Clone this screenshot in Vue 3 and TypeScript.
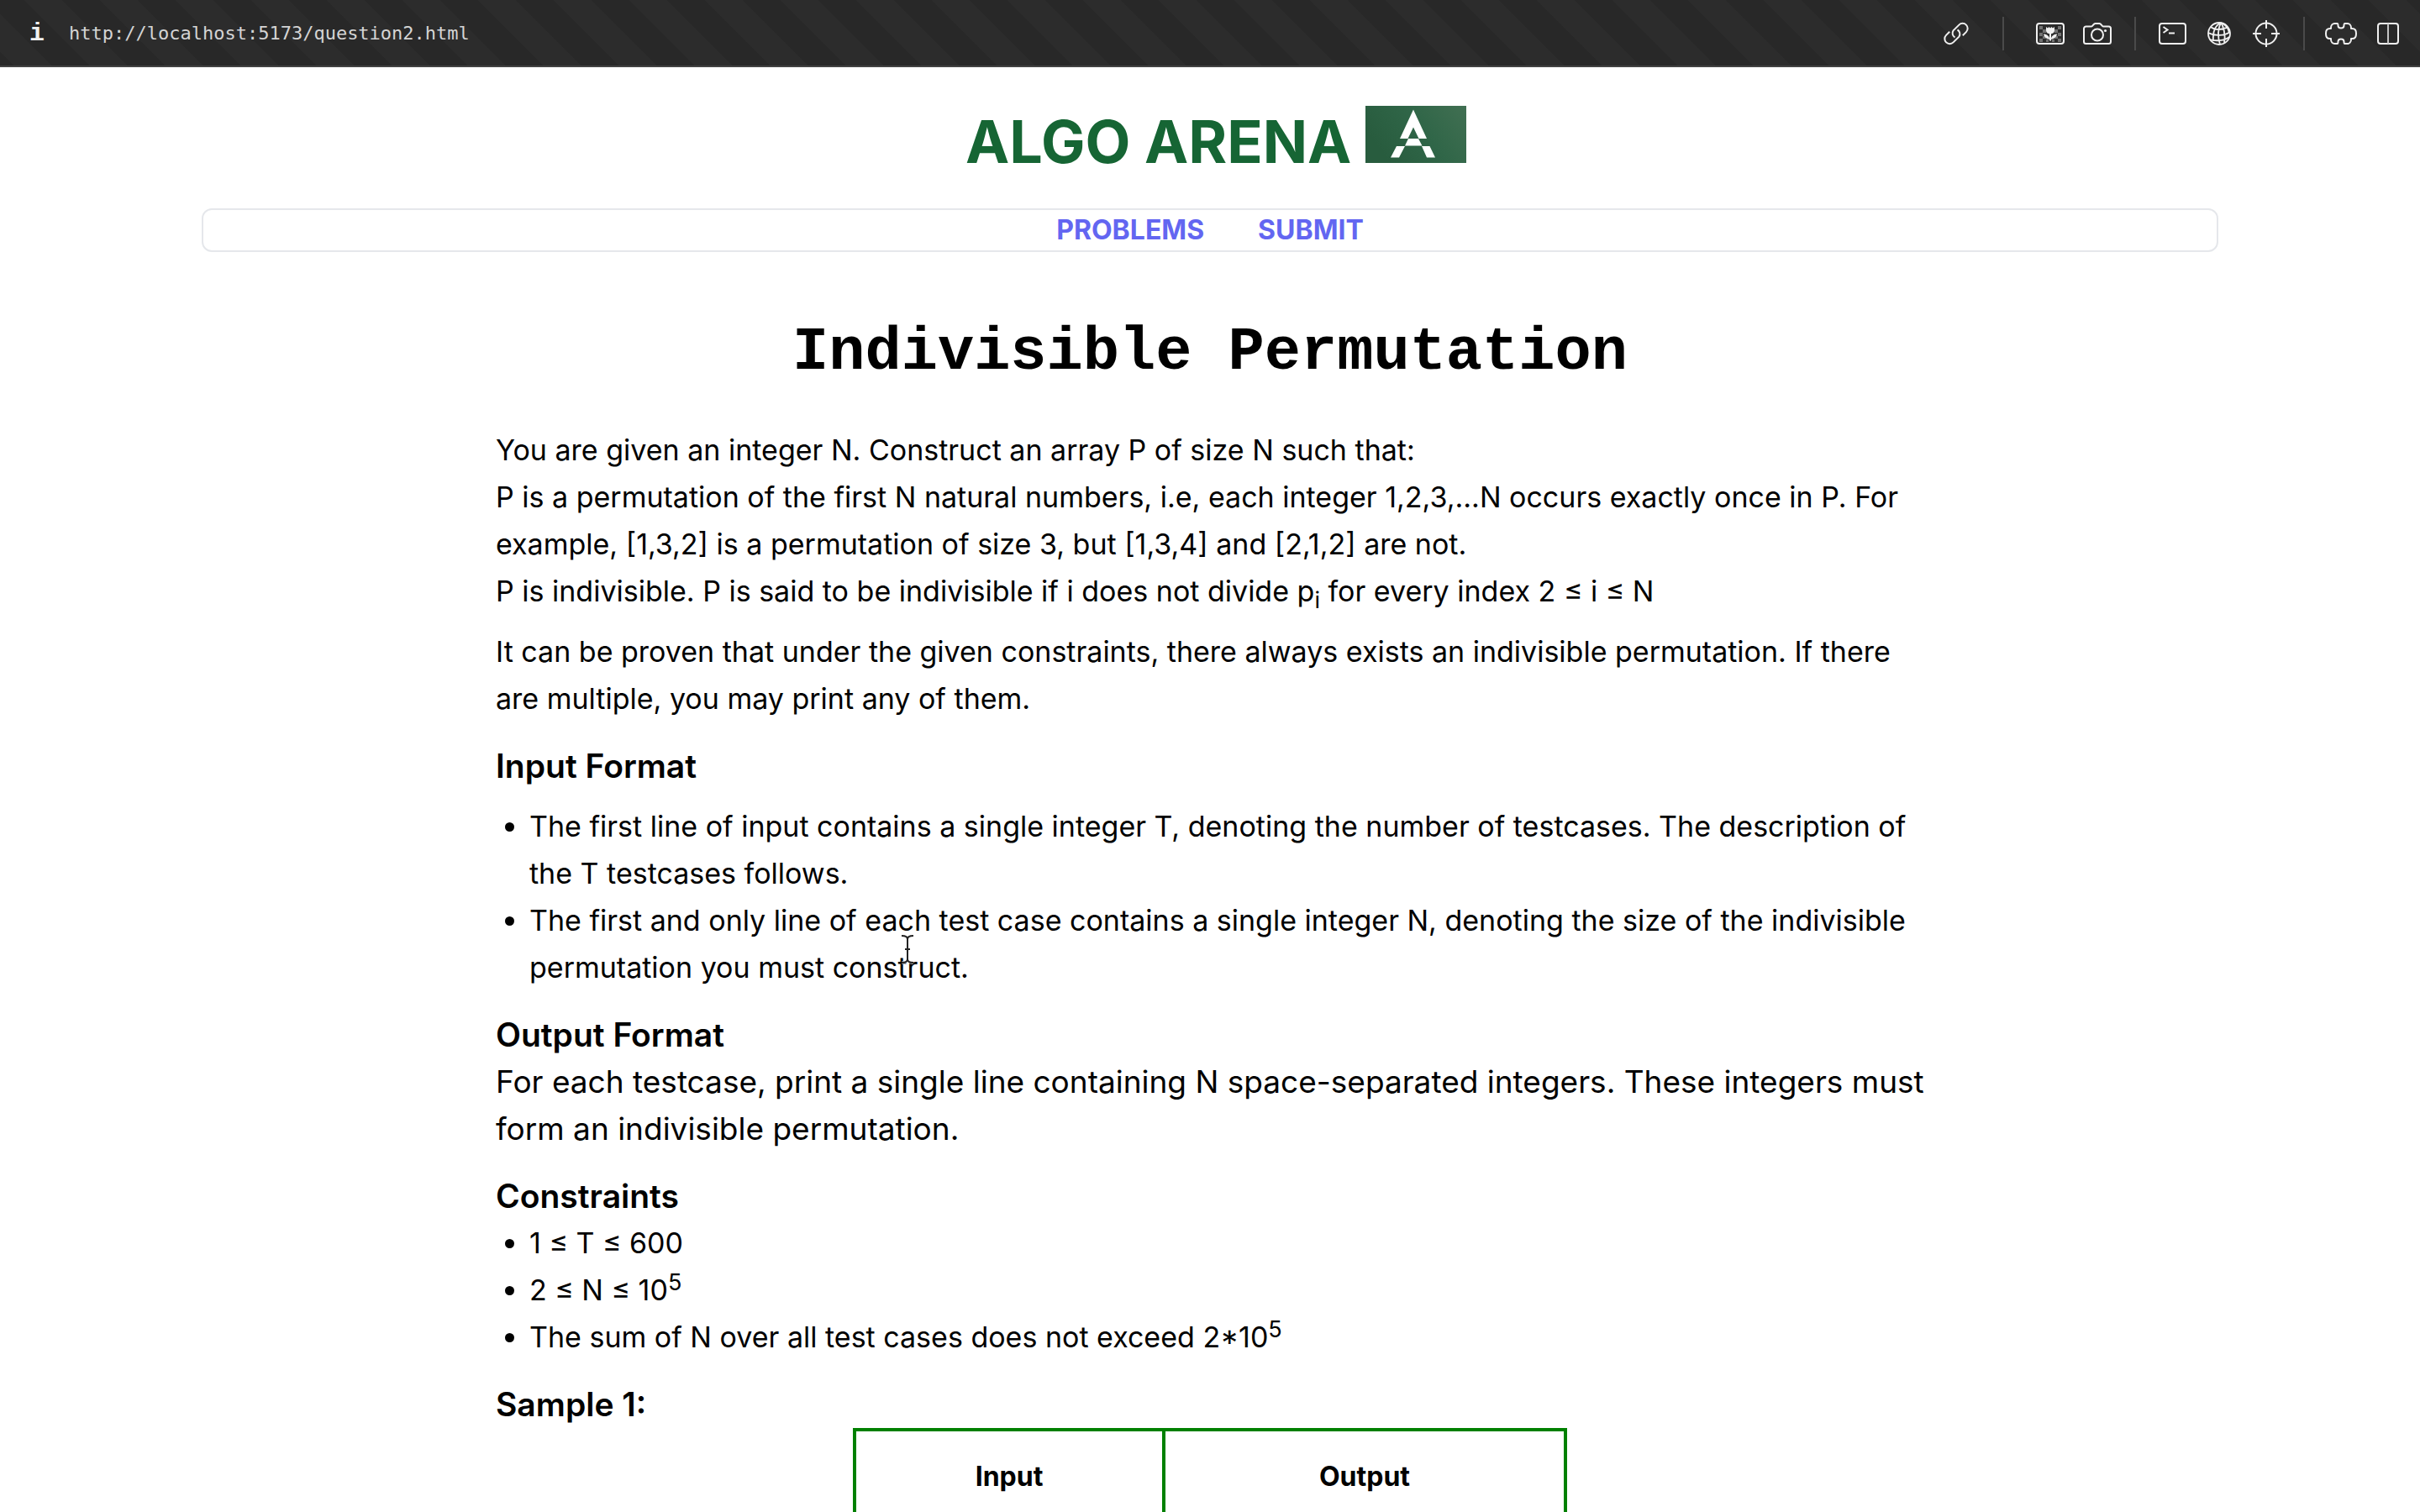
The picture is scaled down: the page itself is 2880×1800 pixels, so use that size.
<script setup lang="ts">
interface NavLink {
  label: string
  href: string
}

const url = 'http://localhost:5173/question2.html'

const links: NavLink[] = [
  { label: 'PROBLEMS', href: '#problems' },
  { label: 'SUBMIT', href: '#submit' },
]

const inputNotes: string[] = [
  'The first line of input contains a single integer T, denoting the number of testcases. The description of the T testcases follows.',
  'The first and only line of each test case contains a single integer N, denoting the size of the indivisible permutation you must construct.',
]
</script>

<template>
  <div class="window">
    <header class="toolbar">
      <button class="info" type="button" aria-label="Page info">i</button>
      <span class="url">{{ url }}</span>
      <div class="tools">
        <button class="tool" type="button" aria-label="Copy link">
          <svg width="32" height="32" viewBox="0 0 32 32">
            <g fill="none" stroke="#f0f0f0" stroke-width="2" stroke-linecap="butt">
              <path d="M14.500 20.500 A5.600 5.600 0 0 1 12.600 12.400 L19.400 5.600 A5.900 5.900 0 0 1 27.900 14.100 L23.800 18.200" />
              <path d="M17.500 11.500 A5.600 5.600 0 0 1 19.400 19.600 L12.600 26.400 A5.900 5.900 0 0 1 4.100 17.900 L8.200 13.800" />
            </g>
          </svg>
        </button>
        <span class="divider wide"></span>
        <button class="tool" type="button" aria-label="Images">
          <svg width="36" height="32" viewBox="0 0 36 32">
            <g fill="#727272">
              <path d="M5 7h4v4h-4zM9 11h4v4h-4zM5 15h4v4h-4zM9 19h4v3h-4zM5 22h4v4h-4zM27 7h4v4h-4zM23 11h4v4h-4zM27 15h4v4h-4zM23 19h4v3h-4zM27 22h4v4h-4zM13 23h3v3h-3zM20 23h3v3h-3z" />
            </g>
            <rect x="2" y="4" width="32" height="24" rx="3" fill="none" stroke="#f0f0f0" stroke-width="2" />
            <path fill="#f0f0f0" d="M13 8l2 1.500 1.500-1.500 1.500 1.500 1.500-1.500 1.500 1.500 2-1.500v4c0 2.500-1.500 4-4 4.300v5c1-3 4-4.800 7-4.800-.5 3.500-3.500 6-7 6.300v1.700h-2v-1.700c-3.500-.3-6.500-2.800-7-6.300 3 0 6 1.800 7 4.800v-5c-2.500-.3-4-1.800-4-4.300z" />
          </svg>
        </button>
        <button class="tool" type="button" aria-label="Screenshot">
          <svg width="36" height="32" viewBox="0 0 36 32">
            <path fill="none" stroke="#f0f0f0" stroke-width="2" d="M4.500 7.500h6.500c1.500 0 2.500-3.500 4.500-3.500h5c2 0 3 3.500 4.500 3.500h6.500a2.500 2.500 0 0 1 2.500 2.500v15.500a2.500 2.500 0 0 1-2.500 2.500h-27a2.500 2.500 0 0 1-2.500-2.500v-15.500a2.500 2.500 0 0 1 2.500-2.500z" />
            <circle cx="18" cy="17.500" r="7" fill="none" stroke="#f0f0f0" stroke-width="2" />
            <circle cx="27.500" cy="12.500" r="1.600" fill="#f0f0f0" />
          </svg>
        </button>
        <span class="divider"></span>
        <button class="tool" type="button" aria-label="Console">
          <svg width="34" height="32" viewBox="0 0 34 32">
            <rect x="2" y="4" width="31" height="24" rx="3" fill="none" stroke="#f0f0f0" stroke-width="2" />
            <path fill="none" stroke="#f0f0f0" stroke-width="2" d="M6.500 8l5 3.500-5 3.500M13 15.500h7" />
          </svg>
        </button>
        <button class="tool" type="button" aria-label="Network">
          <svg width="32" height="32" viewBox="0 0 32 32">
            <g fill="none" stroke="#f0f0f0" stroke-width="1.800">
              <circle cx="16" cy="16" r="13" />
              <path d="M18 3c-6 3-10 10-9 22M18 3c-3 6-4 16-1 26M18 3c3 4 6 14 4 24M18 3c5 2 9 7 10 12M6 8c5 4 14 4 20 0M3 15c7 4 19 4 26-1M5 23c6 2 17 2 23-3" />
            </g>
          </svg>
        </button>
        <button class="tool" type="button" aria-label="Inspect">
          <svg width="34" height="34" viewBox="0 0 34 34">
            <g fill="none" stroke="#f0f0f0" stroke-width="2">
              <circle cx="17" cy="17" r="12.500" />
              <path d="M17 1v10M17 23v10M1 17h10M23 17h10" />
            </g>
          </svg>
        </button>
        <span class="divider"></span>
        <button class="tool" type="button" aria-label="Extensions">
          <svg width="40" height="32" viewBox="0 0 40 32">
            <path fill="none" stroke="#f0f0f0" stroke-width="2" stroke-linejoin="round" d="M12.500 4h3c1 0 1 1 1 2.500 0 4 7 4 7 0 0-1.500 0-2.500 1-2.500h3c2.500 0 4.500 2 4.500 5v1c5.500-.5 6 3 6 6s-.5 6.500-6 6v1c0 3-2 5-4.500 5h-3c-1 0-1-1-1-2.500 0-4-7-4-7 0 0 1.500 0 2.500-1 2.500h-3c-2.500 0-4.500-2-4.500-5v-1c-5.500.5-6-3-6-6s.5-6.500 6-6v-1c0-3 2-5 4.500-5z" />
          </svg>
        </button>
        <button class="tool" type="button" aria-label="Split view">
          <svg width="28" height="32" viewBox="0 0 28 32">
            <rect x="2" y="4" width="24" height="24" rx="3" fill="none" stroke="#f0f0f0" stroke-width="2" />
            <path d="M14 4v24" stroke="#c4c4c4" stroke-width="2" />
          </svg>
        </button>
      </div>
    </header>

    <div class="page">
      <h1 class="brand">
        ALGO ARENA
        <svg class="logo" width="120" height="68" viewBox="0 0 120 68" role="img" aria-label="Algo Arena logo">
          <defs>
            <linearGradient id="felt" x1="0" y1="0.400" x2="1" y2="0">
              <stop offset="0" stop-color="#285c3e" />
              <stop offset="0.500" stop-color="#306648" />
              <stop offset="1" stop-color="#416f52" />
            </linearGradient>
          </defs>
          <rect width="120" height="68" fill="url(#felt)" />
          <path fill="#fff" d="M57 4.500L73 39H63.500L57 25.500 50.500 39H41zM51 39H63L67.500 47.500H47zM37 48H47L40 61.500H30zM67 48H76.500L83 61.500H73z" />
        </svg>
      </h1>

      <nav class="menu">
        <a v-for="link in links" :key="link.label" :href="link.href">{{ link.label }}</a>
      </nav>

      <main class="problem">
        <h2 class="title">Indivisible Permutation</h2>

        <p>
          You are given an integer N. Construct an array P of size N such that:<br />
          P is a permutation of the first N natural numbers, i.e, each integer 1,2,3,...N occurs exactly once in P. For
          example, [1,3,2] is a permutation of size 3, but [1,3,4] and [2,1,2] are not.<br />
          P is indivisible. P is said to be indivisible if i does not divide p<sub>i</sub> for every index 2 ≤ i ≤ N
        </p>
        <p class="spaced">
          It can be proven that under the given constraints, there always exists an indivisible permutation. If there
          are multiple, you may print any of them.
        </p>

        <h3>Input Format</h3>
        <ul class="spaced">
          <li v-for="note in inputNotes" :key="note">{{ note }}</li>
        </ul>

        <h3>Output Format</h3>
        <p class="large">
          For each testcase, print a single line containing N space-separated integers. These integers must form an
          indivisible permutation.
        </p>

        <h3>Constraints</h3>
        <ul>
          <li>1 ≤ T ≤ 600</li>
          <li>2 ≤ N ≤ 10<sup>5</sup></li>
          <li>The sum of N over all test cases does not exceed 2*10<sup>5</sup></li>
        </ul>

        <h3>Sample 1:</h3>
        <table class="sample">
          <thead>
            <tr>
              <th class="input">Input</th>
              <th>Output</th>
            </tr>
          </thead>
        </table>
      </main>
    </div>

    <svg class="pointer" width="16" height="36" viewBox="0 0 16 36" aria-hidden="true">
      <path fill="none" stroke="#fff" stroke-opacity="0.500" stroke-width="4" d="M1 2c4 0 7 1 7 4v24c0 3-3 4-7 4M15 2c-4 0-7 1-7 4M8 30c0 3 3 4 7 4" />
      <path fill="none" stroke="#222" stroke-width="2" d="M1 2c4 0 7 1 7 4v24c0 3-3 4-7 4M15 2c-4 0-7 1-7 4M8 30c0 3 3 4 7 4M5 18h6" />
    </svg>
  </div>
</template>

<style>
body {
  margin: 0;
  background: #fff;
}
</style>

<style scoped>
.window {
  position: relative;
  height: 100vh;
  overflow: hidden;
  display: flex;
  flex-direction: column;
  color: #000;
  font-family: Inter, 'Liberation Sans', sans-serif;
}

.toolbar {
  box-sizing: border-box;
  flex: none;
  display: flex;
  align-items: center;
  height: 80px;
  padding: 2px 10px 0 28px;
  border-bottom: 2px solid #424242;
  background-color: #282828;
  background-image: linear-gradient(
    45deg,
    #2c2c2c 25%,
    #282828 25%,
    #282828 50%,
    #2c2c2c 50%,
    #2c2c2c 75%,
    #282828 75%
  );
  background-position: 29px 0;
  background-size: 90px 90px;
}

button {
  padding: 0;
  border: 0;
  background: none;
}

.info {
  width: 32px;
  color: #f0f0f0;
  font: 700 30px/40px 'Liberation Mono', monospace;
}

.url {
  margin-left: 22px;
  color: #d4d4d4;
  font: 22px/40px 'DejaVu Sans Mono', monospace;
}

.tools {
  display: flex;
  align-items: center;
  margin-left: auto;
}

.tool {
  display: flex;
  align-items: center;
  justify-content: center;
  width: 56px;
  height: 56px;
}

.divider {
  width: 2px;
  height: 40px;
  margin: 0 15px 0 16px;
  background: #4a4a4a;
}

.divider.wide {
  margin: 0 27px;
}

.page {
  flex: none;
  padding-top: 46px;
}

.brand {
  margin: 0;
  padding-left: 14px;
  color: #166534;
  font-size: 70px;
  line-height: 80px;
  text-align: center;
}

.menu {
  display: flex;
  justify-content: center;
  gap: 64px;
  box-sizing: border-box;
  max-width: 2400px;
  margin: 39px auto 0;
  border: 2px solid #e5e7eb;
  border-radius: 12px;
}

.menu a {
  color: #6366f1;
  font-size: 32px;
  font-weight: 700;
  line-height: 48px;
  text-decoration: none;
}

.problem {
  max-width: 1700px;
  margin: 80px auto 0;
  font-size: 34px;
  line-height: 56px;
}

.title {
  margin: 0 0 48px;
  font: 700 72px/80px 'Liberation Mono', monospace;
  text-align: center;
}

p,
ul {
  margin: 0;
}

ul {
  padding-left: 40px;
}

.spaced {
  margin-top: 16px;
}

.large {
  font-size: 37px;
}

h3 {
  margin: 24px 0 0;
  font-size: 39px;
  font-weight: 600;
}

sub,
sup {
  font-size: 27px;
  line-height: 0;
}

.sample {
  width: 50%;
  margin: 0 auto;
  border-collapse: collapse;
  table-layout: fixed;
}

th {
  padding: 30px 0;
  border: 4px solid #008000;
  font-size: 32px;
  font-weight: 700;
  line-height: 48px;
}

.input {
  width: 364px;
}

.pointer {
  position: absolute;
  top: 1112px;
  left: 1072px;
}
</style>
